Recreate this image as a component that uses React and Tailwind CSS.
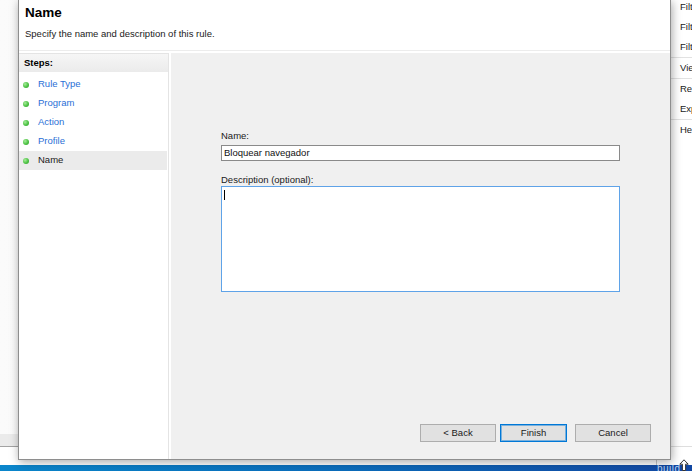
import React from "react";

const STEPS = [
  { label: "Rule Type", done: true },
  { label: "Program", done: true },
  { label: "Action", done: true },
  { label: "Profile", done: true },
  { label: "Name", current: true },
];

function Bullet() {
  return (
    <span className="w-[6px] h-[6px] rounded-full shrink-0 bg-[radial-gradient(circle_at_35%_35%,#a6ec9a_0%,#4cc243_55%,#2f9a2a_100%)]" />
  );
}

function ActionsPane() {
  const rows = [
    ["Filter by Profile", false],
    ["Filter by State", false],
    ["Filter by Group", false],
    ["View", true],
    ["Refresh", true],
    ["Export List...", false],
    ["Help", true],
  ];
  return (
    <div className="w-[24px] bg-white border-b border-[#dedede] flex flex-col -mt-[3px] overflow-hidden">
      {rows.map(([label, sep]) => (
        <div
          key={label}
          className={
            "shrink-0 flex items-center pl-[12px] whitespace-nowrap text-[9.5px] text-[#1a1a1a] " +
            (sep ? "h-[21px] border-t border-[#e2e2e2]" : "h-[20px]")
          }
        >
          {label}
        </div>
      ))}
    </div>
  );
}

function Button({ children, primary }) {
  return (
    <button
      className={
        "h-[18px] flex items-center justify-center bg-[#e1e1e1] text-[9.5px] text-[#1a1a1a] border " +
        (primary
          ? "w-[67px] border-[#0078d7] shadow-[inset_0_0_0_1px_rgba(0,120,215,0.45)]"
          : "w-[76px] border-[#adadad]")
      }
    >
      {children}
    </button>
  );
}

function Wizard() {
  return (
    <div className="absolute left-[18px] top-0 w-[653px] h-[460px] bg-white border-x border-b border-[#8e8e8e] shadow-[1px_2px_9px_rgba(0,0,0,0.35)] flex flex-col">
      {/* Header */}
      <div className="h-[51px] shrink-0 border-b border-[#ececec] pl-[6px] pt-[5px]">
        <div className="text-[13.5px] leading-[16px] font-bold text-black">Name</div>
        <div className="mt-[7px] text-[9.5px] leading-[11px] text-[#1a1a1a]">
          Specify the name and description of this rule.
        </div>
      </div>

      <div className="flex flex-1 pt-[2px] min-h-0">
        {/* Steps */}
        <div className="w-[150px] shrink-0 border-t border-r border-[#e4e4e4] flex flex-col">
          <div className="h-[18px] flex items-center pl-[5px] bg-gradient-to-b from-[#f6f6f6] to-[#ebebeb] text-[9.5px] font-bold text-black">
            Steps:
          </div>
          <div className="mt-[3px] flex flex-col">
            {STEPS.map((s) => (
              <div
                key={s.label}
                className={
                  "h-[19px] mr-[1px] flex items-center pl-[4px] gap-[9px] text-[9.5px] " +
                  (s.current ? "bg-[#ebebeb] text-[#1a1a1a]" : "text-[#2a6fd6]")
                }
              >
                <Bullet />
                {s.label}
              </div>
            ))}
          </div>
        </div>

        {/* Form */}
        <div className="flex-1 ml-[2px] bg-[#f0f0f0] flex flex-col pl-[50px] pr-[19px] pt-[77px] pb-[17px]">
          <div className="mr-[31px] flex flex-col">
            <div className="h-[11px] leading-[11px] text-[9.5px] text-[#1a1a1a]">Name:</div>
            <div className="mt-[4px] h-[16px] bg-white border border-[#8a8a8a] flex items-center pl-[2px] text-[9.5px] text-[#111]">
              Bloquear navegador
            </div>
            <div className="mt-[13px] h-[11px] leading-[11px] text-[9.5px] text-[#1a1a1a]">
              Description (optional):
            </div>
            <div className="mt-[1px] h-[106px] bg-white border border-[#5fa3e8] pl-[2px] pt-[3px]">
              <div className="w-px h-[10px] bg-black" />
            </div>
          </div>
          <div className="flex-1" />
          <div className="flex justify-end">
            <Button>&lt; Back</Button>
            <div className="w-[4px]" />
            <Button primary>Finish</Button>
            <div className="w-[8px]" />
            <Button>Cancel</Button>
          </div>
        </div>
      </div>
    </div>
  );
}

export default function App() {
  return (
    <div className="relative w-[692px] h-[471px] overflow-hidden bg-white font-['Liberation_Sans',Arial,sans-serif]">
      <div className="flex flex-col h-full">
        <div className="flex h-[447px]">
          <div className="flex-1 flex flex-col">
            <div className="flex-1 bg-gradient-to-r from-[#fbfbfb] to-[#efefef]" />
            <div className="h-[13px] bg-[#ebebeb] border-b border-[#a3a3a3]" />
          </div>
          <ActionsPane />
        </div>
        <div className="h-[18px] flex bg-white">
          <div className="w-[656px]" />
          <div className="border-l border-[#c8c8c8]" />
        </div>
        <div className="relative h-[6px] bg-gradient-to-r from-[#0b86cb] via-[#0b6cbb] to-[#1247a2] overflow-hidden">
          <span className="absolute left-[657px] -top-[1px] text-[10px] leading-[10px] text-[#bcd6f2] tracking-[0.5px]">
            build
          </span>
        </div>
      </div>
      <svg
        className="absolute left-[679px] top-[459px]"
        width="10"
        height="12"
        viewBox="0 0 10 12"
      >
        <path d="M5 0.8 L9.2 5.2 L6.6 5.2 L6.6 11.5 L3.4 11.5 L3.4 5.2 L0.8 5.2 Z" fill="#fff" stroke="#333" strokeWidth="1" />
      </svg>
      <Wizard />
    </div>
  );
}
